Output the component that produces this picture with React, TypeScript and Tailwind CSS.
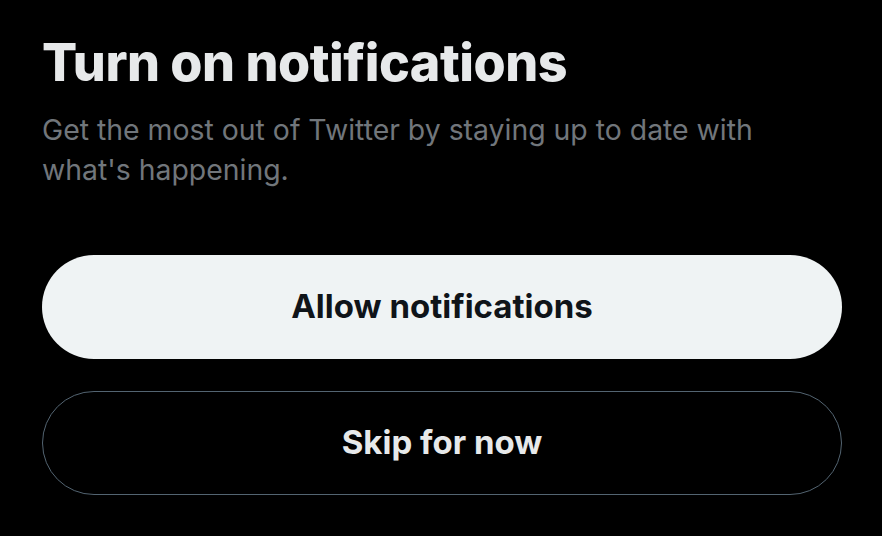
export default function App() {
  return (
    <div className="w-[882px] h-[536px] bg-black overflow-hidden px-[42px] pt-[33px] font-['Inter',sans-serif]">
      <h1 className="text-[52px] leading-[60px] font-extrabold text-[#e7e9ea] tracking-[-0.5px]">
        Turn on notifications
      </h1>
      <p className="mt-[17px] text-[28.4px] leading-[40px] text-[#71767b] w-[780px]">
        Get the most out of Twitter by staying up to date with what's happening.
      </p>
      <div className="mt-[65px] flex flex-col gap-[32px]">
        <button className="h-[104px] w-[800px] rounded-full bg-[#eff3f4] text-[#0f1419] text-[33px] font-bold">
          Allow notifications
        </button>
        <button className="h-[104px] w-[800px] rounded-full border-[1.5px] border-[#536471] text-[#e7e9ea] text-[33px] font-bold">
          Skip for now
        </button>
      </div>
    </div>
  );
}
